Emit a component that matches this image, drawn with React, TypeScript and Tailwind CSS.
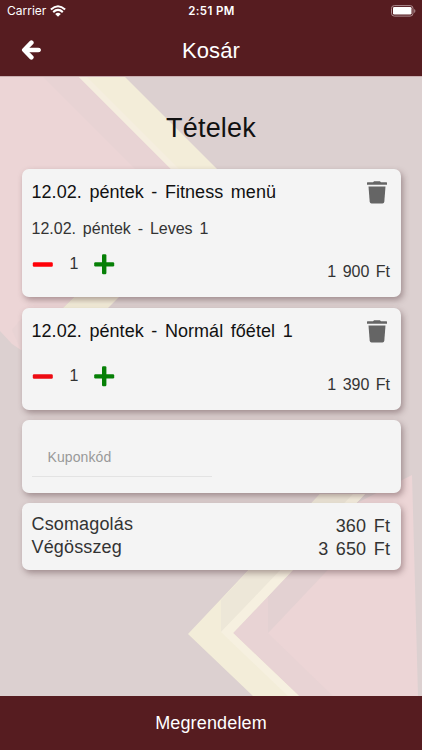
import type { ReactNode } from "react";

function Backdrop() {
  return (
    <svg className="absolute inset-0" width="422" height="620" viewBox="0 75 422 620" aria-hidden="true">
      <rect y="75" width="422" height="620" fill="#dcd0d0" />
      <path d="M0 75H78L187 184L62 308L21 349L12 343L0 330Z" fill="#ecd5d6" />
      <path d="M42 75H78L187 184L151 184Z" fill="#e8d3d4" />
      <path d="M21 318L12 329L21 349L62 308Z" fill="#e8d3d4" />
      <path d="M78 75H124L232 183L107 308H62L187 184Z" fill="#f3edd9" />
      <path d="M78 75H86L195 184L187 184Z" fill="#f5eedf" />
      <path d="M233 632L355 503L412 474L418 695H299Z" fill="#ecd5d6" />
      <path d="M233 632L355 503L390 503L268 632L333 695H299Z" fill="#e8d3d4" />
      <path d="M268 632V595L355 503H390Z" fill="#e3d1d2" />
      <path d="M188 633L320 493H365L233 632L299 695H253Z" fill="#f3edd9" />
      <path d="M221 599L320 493H355L221 631Z" fill="#ede7d8" />
      <path d="M221 631L353 493H365L233 632L299 695H288Z" fill="#f6f0e0" />
    </svg>
  );
}

function Card({ children, className }: { children?: ReactNode; className: string }) {
  return (
    <section className={`w-[379px] rounded-[7px] bg-[#f4f4f4] pl-[10px] pr-[10.5px] shadow-[2px_3px_6px_rgba(70,40,45,0.4)] ${className}`}>
      {children}
    </section>
  );
}

function Trash() {
  return (
    <svg className="mr-[3px] mt-[12px] shrink-0" width="20" height="23" viewBox="0 0 20 23" fill="#656565" aria-label="Törlés">
      <path d="M.6 1.2H6L7.1.2H12.9L14 1.2H19.4Q20 1.2 20 1.8V3.8H0V1.8Q0 1.2.6 1.2Z" />
      <path d="M1.5 5.5H18.5L17.3 20.8Q17.1 22.5 15.5 22.5H4.5Q2.9 22.5 2.7 20.8Z" />
    </svg>
  );
}

function Quantity({ red }: { red: string }) {
  return (
    <div className="flex h-[21px] items-center">
      <svg width="21" height="21" viewBox="0 0 21 21" aria-label="Kevesebb">
        <rect x=".8" y="8.2" width="20" height="4.5" rx="1.2" fill={red} />
      </svg>
      <span className="ml-[17px] w-[9px] text-[16px] leading-[18px] text-[#333]">1</span>
      <svg className="ml-[15.5px]" width="21" height="21" viewBox="0 0 21 21" fill="#068006" aria-label="Több">
        <rect x=".2" y="8.2" width="20" height="4.2" rx="1.2" />
        <rect x="8" y=".3" width="4.4" height="20" rx="1.2" />
      </svg>
    </div>
  );
}

export default function App() {
  return (
    <div className="flex h-[750px] w-[422px] flex-col overflow-hidden font-['Liberation_Sans',Arial,sans-serif] text-[#333]">
      <header className="h-[75.5px] shrink-0 bg-[#561c20] text-white">
        <div className="grid h-[22px] grid-cols-3 items-center pl-[7px] pr-[6px] font-[Inter,sans-serif]">
          <div className="flex items-center gap-[4px] text-[12px] tracking-[0px]">
            <span>Carrier</span>
            <svg className="-mt-px" width="16" height="12" viewBox="0 0 16 12" fill="none" stroke="white" strokeWidth="2.1">
              <path d="M.9 4.5Q8-2 15.1 4.5M3.2 7.1Q8 2.8 12.8 7.1" />
              <path d="M5.2 8.9Q8 6.6 10.8 8.9L8 11.7Z" fill="white" stroke="none" />
            </svg>
          </div>
          <div className="mt-[2px] text-center text-[11.5px] font-semibold tracking-[0.4px]">2:51 PM</div>
          <svg className="justify-self-end" width="25" height="12" viewBox="0 0 25 12">
            <rect x=".5" y=".6" width="21.5" height="10.5" rx="2.8" fill="none" stroke="#ae8d90" />
            <rect x="2" y="2" width="18.5" height="7.6" rx="1.3" fill="white" />
            <path d="M23.2 4V8Q24.4 7.5 24.4 6T23.2 4Z" fill="#ae8d90" />
          </svg>
        </div>
        <div className="grid h-[53px] grid-cols-[60px_1fr_60px] items-center">
          <svg className="ml-[21px] mt-[3px]" width="20" height="20" viewBox="0 0 20 20" fill="none" stroke="white" strokeWidth="4.5" strokeLinecap="round" strokeLinejoin="round">
            <path d="M10.4 2.7L3.2 10L10.4 17.3" />
            <path d="M4 10H17.4" />
            <path d="M17 10H18.2" strokeWidth="3.3" />
          </svg>
          <h1 className="mt-[4px] text-center text-[22px] leading-[28px] tracking-[0.1px]">Kosár</h1>
        </div>
      </header>

      <main className="relative h-[620px] shrink-0">
        <Backdrop />
        <div className="relative flex flex-col items-center border-t border-[#c9aeb0]">
          <h2 className="mt-[35px] h-[32px] text-center text-[27px] leading-[32px] tracking-[0.2px] text-[#111]">Tételek</h2>
          <Card className="mt-[25px] h-[128.5px]">
            <div className="flex justify-between">
              <h3 className="mt-[12px] h-[22px] whitespace-nowrap text-[18px] leading-[22px] tracking-[0.05px] [word-spacing:2.5px] text-[#111]">12.02. péntek - Fitness menü</h3>
              <Trash />
            </div>
            <p className="mt-[15px] text-[16px] leading-[20px] [word-spacing:2.4px]">12.02. péntek - Leves 1</p>
            <div className="mt-[15px] flex justify-between">
              <Quantity red="#ff0008" />
              <span className="mt-[8px] text-[16px] leading-[20px] [word-spacing:2px]">1 900 Ft</span>
            </div>
          </Card>
          <Card className="mt-[10.5px] h-[102.5px]">
            <div className="flex justify-between">
              <h3 className="mt-[12px] h-[22px] whitespace-nowrap text-[18px] leading-[22px] tracking-[0.05px] [word-spacing:2.5px] text-[#111]">12.02. péntek - Normál főétel 1</h3>
              <Trash />
            </div>
            <div className="mt-[23px] flex justify-between">
              <Quantity red="#ed0b12" />
              <span className="mt-[9px] text-[16px] leading-[20px] [word-spacing:2px]">1 390 Ft</span>
            </div>
          </Card>
          <Card className="mt-[10px] h-[72.5px]">
            <div className="mt-[18px] h-[38.5px] w-[180px] border-b border-[#e3e3e3]">
              <input className="w-full bg-transparent pl-[16px] pt-[9px] text-[14px] leading-[20px] tracking-[0.1px] outline-none placeholder:text-[#999]" placeholder="Kuponkód" />
            </div>
          </Card>
          <Card className="mt-[10px] h-[67px] pt-[10px]">
            <div className="flex h-[23.5px] justify-between text-[18px] leading-[23px]">
              <span className="tracking-[0.15px]">Csomagolás</span>
              <span className="mt-[2px] tracking-[0.1px] [word-spacing:2.7px]">360 Ft</span>
            </div>
            <div className="flex h-[23.5px] justify-between text-[18px] leading-[23px]">
              <span className="tracking-[0.15px]">Végösszeg</span>
              <span className="mt-[2px] tracking-[0.1px] [word-spacing:2.5px]">3 650 Ft</span>
            </div>
          </Card>
        </div>
      </main>

      <button className="h-[54.5px] shrink-0 bg-[#561c20] pt-[2px] text-[18px] tracking-[0.15px] text-white">Megrendelem</button>
    </div>
  );
}
